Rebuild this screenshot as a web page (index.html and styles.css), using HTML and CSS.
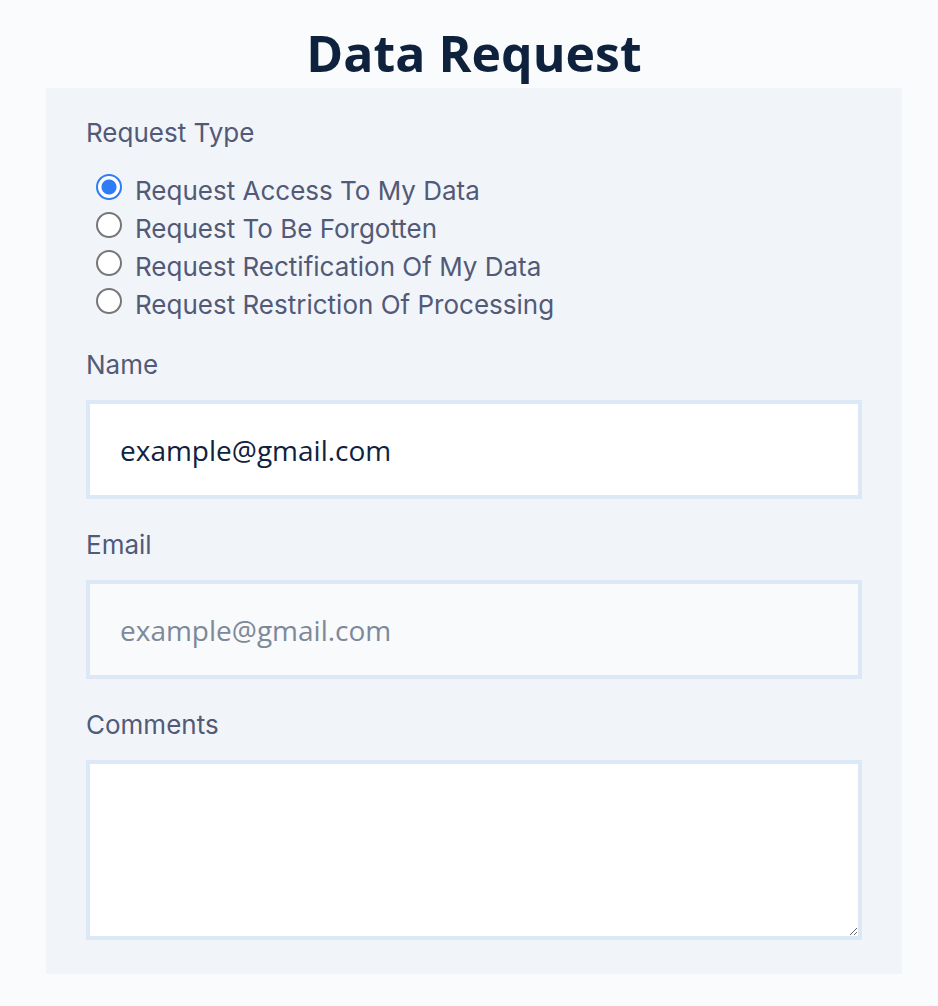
FILE: index.html
```html
<!DOCTYPE html>
<html lang="en">
<head>
<meta charset="utf-8">
<title>Data Request</title>
<link rel="stylesheet" href="styles.css">
</head>
<body>
<main class="page">
  <h1 class="title">Data Request</h1>
  <form class="card">
    <fieldset class="group">
      <legend class="label">Request Type</legend>
      <div class="radios">
        <label class="radio"><input type="radio" name="type" checked><span>Request Access To My Data</span></label>
        <label class="radio"><input type="radio" name="type"><span>Request To Be Forgotten</span></label>
        <label class="radio"><input type="radio" name="type"><span>Request Rectification Of My Data</span></label>
        <label class="radio"><input type="radio" name="type"><span>Request Restriction Of Processing</span></label>
      </div>
    </fieldset>
    <div class="field">
      <label class="label" for="name">Name</label>
      <input class="input" id="name" type="text" value="example@gmail.com">
    </div>
    <div class="field">
      <label class="label" for="email">Email</label>
      <input class="input input-muted" id="email" type="email" placeholder="example@gmail.com">
    </div>
    <div class="field">
      <label class="label" for="comments">Comments</label>
      <textarea class="input textarea" id="comments"></textarea>
    </div>
  </form>
</main>
</body>
</html>
```
FILE: styles.css
```css
* { box-sizing: border-box; }
html, body { margin: 0; padding: 0; }
body {
  background: #f9fbfd;
  font-family: "Inter", "Noto Sans", sans-serif;
}
.page {
  width: 856px;
  margin-left: 46px;
  display: flex;
  flex-direction: column;
}
.title {
  margin: 25px 0 0;
  height: 63px;
  line-height: 57px;
  text-align: center;
  font-family: "Open Sans", sans-serif;
  font-weight: 700;
  font-size: 50px;
  color: #0f223d;
}
.card {
  background: #f1f5fa;
  padding: 30px 40px 34px;
  display: flex;
  flex-direction: column;
  gap: 31px;
}
.group {
  border: 0;
  margin: 0 0 -4px;
  padding: 0;
}
.label {
  display: block;
  padding: 0;
  font-size: 26px;
  line-height: 30px;
  color: #525a77;
  margin-bottom: 10px;
}
.field .label { margin-bottom: 20px; }
.radios {
  display: flex;
  flex-direction: column;
  padding-left: 10px;
  margin-top: 13px;
}
.radio {
  display: flex;
  align-items: center;
  height: 38px;
  font-size: 26px;
  color: #525a77;
}
.radio input {
  appearance: none;
  -webkit-appearance: none;
  width: 26px;
  height: 26px;
  margin: 0 13px 0 0;
  border: 2px solid #767676;
  border-radius: 50%;
  background: #fff;
  position: relative;
  top: -3px;
}
.radio input:checked {
  border-color: #2e7cf6;
  background: radial-gradient(circle, #2e7cf6 0 7px, #fff 8px);
}
.input {
  display: block;
  width: 100%;
  height: 99px;
  border: 4px solid #dde8f6;
  background: #fff;
  padding: 0 30px;
  font-family: "Open Sans", sans-serif;
  font-size: 28px;
  color: #0f2240;
  outline: none;
}
.input-muted { background: #f8fafc; }
.input-muted::placeholder { color: #7d8999; opacity: 1; }
.textarea {
  height: 180px;
  resize: vertical;
}
```
